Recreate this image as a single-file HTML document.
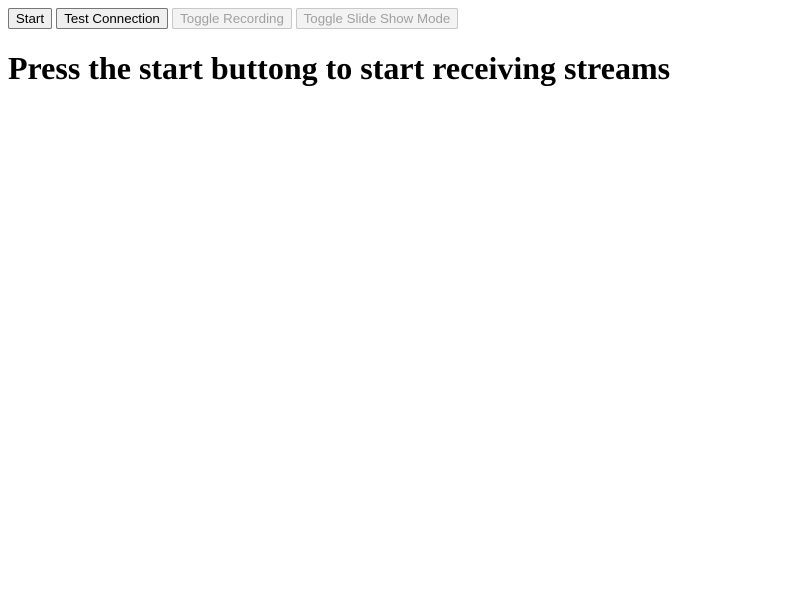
<!DOCTYPE html>
<html><head><style>
body{margin:8px;font-family:"Liberation Serif",serif;background:#fff;}
button{font-family:"Liberation Sans",sans-serif;font-size:13.33px;height:21px;padding:0 6px;margin:0 4px 0 0;border:1px solid #767676;border-radius:2px;background:#efefef;color:#000;vertical-align:top;box-sizing:border-box;}
button:disabled{color:#a0a0a0;border-color:#c8c8c8;background:#f3f3f3;}
h1{font-size:32px;font-weight:bold;margin:21px 0;}
</style></head><body>
<div><button style="width:44px">Start</button><button style="width:112px">Test Connection</button><button disabled style="width:120px">Toggle Recording</button><button disabled style="width:162px">Toggle Slide Show Mode</button></div>
<h1>Press the start buttong to start receiving streams</h1>
</body></html>
